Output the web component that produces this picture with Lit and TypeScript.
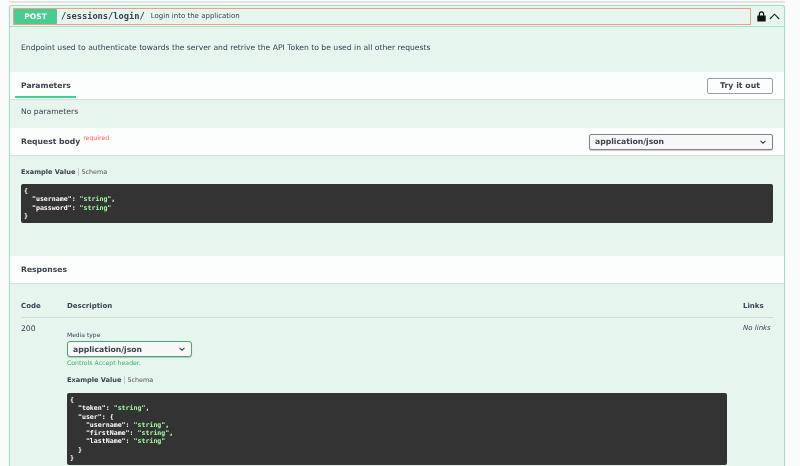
import { LitElement, html, css } from "lit";
import { customElement } from "lit/decorators.js";

@customElement("app-root")
export class AppRoot extends LitElement {
  static styles = css`
    :host { display: block; width: 800px; height: 466px; overflow: hidden; background: #fbfbfb; font-family: "DejaVu Sans", sans-serif; color: #3b4151; }
    .wrap { padding: 4px 15px 0 9px; filter: blur(.35px); }
    .top { height: 2px; margin: -3px 0 2px 0; background: #e4e4e4; }
    .block { border: 1px solid #a3e3c5; border-radius: 3px; border-bottom: 0; background: #e7f5ef; height: 470px; box-shadow: 0 0 2px rgba(0,0,0,.1); }
    .head { display: flex; align-items: center; height: 20px; border-bottom: 1px solid #a3e3c5; padding: 0 4px 0 3px; }
    .summary { flex: 1; display: flex; align-items: center; height: 17px; outline: 1px solid #ee9f88; outline-offset: -1px; box-sizing: border-box; }
    .tag { width: 43px; height: 15px; margin-left: 1px; background: #49cc90; color: #fff; font-size: 7.6px; font-weight: 700; display: flex; align-items: center; justify-content: center; border-radius: 1px; }
    .path { font-family: "DejaVu Sans Mono", monospace; font-weight: 700; font-size: 8.7px; margin-left: 4px; color: #3b4151; }
    .sum { font-size: 7px; margin-left: 6px; color: #3b4151; }
    .lock { margin-left: 6px; }
    .chev { margin-left: 3px; }
    .desc { box-sizing: border-box; height: 45px; display: flex; align-items: center; padding: 0 0 5px 11px; font-size: 7.63px; }
    .bar { background: #fcfdfd; display: flex; align-items: center; box-shadow: 0 1px 1px rgba(0,0,0,.08); padding: 0 11px; }
    .params { height: 27px; justify-content: space-between; }
    .tab { font-size: 7.65px; font-weight: 700; height: 27px; display: flex; align-items: center; position: relative; }
    .tab::after { content: ""; position: absolute; left: -6px; right: -5px; bottom: 1px; height: 2px; background: #49cc90; }
    .try { box-sizing: border-box; width: 66px; height: 16px; border: 1px solid #9a9ea6; border-radius: 2px; font-size: 7.8px; font-weight: 700; display: flex; align-items: center; justify-content: center; }
    .nop { box-sizing: border-box; height: 29px; display: flex; align-items: center; padding: 0 0 5px 11px; font-size: 7.65px; }
    .rb { height: 27px; justify-content: space-between; }
    .rbt { font-size: 7.65px; font-weight: 700; display: flex; }
    .req { color: #f93e3e; opacity: .85; font-size: 6.2px; font-weight: 400; margin: -3px 0 0 3px; }
    .sel { box-sizing: border-box; display: flex; align-items: center; justify-content: space-between; height: 16px; border: 1px solid #7d8492; border-radius: 2px; background: #f7f7f7; font-size: 7.7px; font-weight: 700; padding: 0 5px; box-shadow: 0 1px 1px rgba(0,0,0,.2); }
    .sel1 { width: 184px; }
    .sel2 { width: 125px; border: 1.5px solid #45a86e; border-radius: 3px; margin-top: 3px; }
    .ex { font-size: 6.6px; display: flex; align-items: center; height: 8px; }
    .ex b { font-weight: 700; }
    .ex span { border-left: 1px solid #c4c9c9; margin-left: 3px; padding-left: 2px; color: #555; font-size: 6.4px; }
    .code { background: #333; border-radius: 2px; color: #fff; font-family: "DejaVu Sans Mono", monospace; font-weight: 700; font-size: 6.6px; line-height: 8.3px; white-space: pre; padding: 3px; box-sizing: border-box; }
    .code i { font-style: normal; color: #a2fca2; }
    .body { height: 101px; padding: 13px 11px 0; box-sizing: border-box; }
    .body .code { margin-top: 8px; height: 39px; }
    .resp { height: 27px; }
    .resp div { font-size: 7.65px; font-weight: 700; }
    .tbl { padding: 11px 11px 0; }
    .hdr { display: flex; font-size: 7px; font-weight: 700; height: 23px; border-bottom: 1px solid #cfdcd6; align-items: center; }
    .c1 { width: 46px; flex: none; }
    .c2 { flex: 1; min-width: 0; }
    .c3 { width: 30px; flex: none; }
    .row { display: flex; padding-top: 6px; }
    .code200 { font-size: 7.65px; }
    .nolinks { font-size: 7px; font-style: italic; }
    .mt { font-size: 6px; margin-top: 7px; }
    .ctl { font-size: 6.2px; color: #3fae5f; margin-top: 2px; }
    .c2 .ex { margin-top: 10px; }
    .c2 .code { margin-top: 9px; height: 72px; width: 660px; }
  `;

  render() {
    const chev = html`<svg width="8" height="8" viewBox="0 0 8 8"><path d="M1.5 2.8 4 5.2 6.5 2.8" fill="none" stroke="#3b4151" stroke-width="1.1"/></svg>`;
    return html`<div class="wrap">
      <div class="top"></div>
      <div class="block">
        <div class="head">
          <div class="summary">
            <div class="tag">POST</div>
            <div class="path">/sessions/login/</div>
            <div class="sum">Login into the application</div>
          </div>
          <svg class="lock" width="9" height="11" viewBox="0 0 9 11"><path d="M1.8 4.5V3a2.7 2.7 0 0 1 5.4 0v1.5H8.2c.3 0 .5.2.5.5v5c0 .3-.2.5-.5.5H.8c-.3 0-.5-.2-.5-.5V5c0-.3.2-.5.5-.5zM3 4.5h3V3a1.5 1.5 0 0 0-3 0z" fill="#111"/></svg>
          <svg class="chev" width="11" height="7" viewBox="0 0 11 7"><path d="M.8 6 5.5 1.2 10.2 6" fill="none" stroke="#222" stroke-width="1.1"/></svg>
        </div>
        <div class="desc">Endpoint used to authenticate towards the server and retrive the API Token to be used in all other requests</div>
        <div class="bar params"><div class="tab">Parameters</div><div class="try">Try it out</div></div>
        <div class="nop">No parameters</div>
        <div class="bar rb"><div class="rbt">Request body<span class="req">required</span></div><div class="sel sel1">application/json ${chev}</div></div>
        <div class="body">
          <div class="ex"><b>Example Value</b><span>Schema</span></div>
          <div class="code">{
  "username": <i>"string"</i>,
  "password": <i>"string"</i>
}</div>
        </div>
        <div class="bar resp"><div>Responses</div></div>
        <div class="tbl">
          <div class="hdr"><div class="c1">Code</div><div class="c2">Description</div><div class="c3">Links</div></div>
          <div class="row">
            <div class="c1 code200">200</div>
            <div class="c2">
              <div class="mt">Media type</div>
              <div class="sel sel2">application/json ${chev}</div>
              <div class="ctl">Controls Accept header.</div>
              <div class="ex"><b>Example Value</b><span>Schema</span></div>
              <div class="code">{
  "token": <i>"string"</i>,
  "user": {
    "username": <i>"string"</i>,
    "firstName": <i>"string"</i>,
    "lastName": <i>"string"</i>
  }
}</div>
            </div>
            <div class="c3 nolinks">No links</div>
          </div>
        </div>
      </div>
    </div>`;
  }
}
